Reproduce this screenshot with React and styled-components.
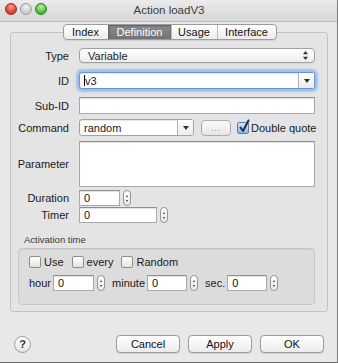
import React from "react";
import styled, { createGlobalStyle, css } from "styled-components";

const Global = createGlobalStyle`
  html, body { margin: 0; padding: 0; }
  body {
    width: 338px; height: 363px; overflow: hidden;
    font-family: "Liberation Sans", Arial, sans-serif;
    font-size: 11px; color: #1a1a1a;
  }
  * { box-sizing: border-box; }
`;

const Window = styled.div`
  width: 338px; height: 363px;
  background: #e8e8e8;
  border-right: 1px solid #7c7c7c;
  border-bottom: 1px solid #6a6a6a;
  display: flex; flex-direction: column;
`;

const TitleBar = styled.div`
  height: 22px; flex: none;
  display: flex; align-items: center;
  padding: 0 0 4px 5px;
  background: linear-gradient(#ebebeb, #d6d6d6);
  border-bottom: 1px solid #bdbdbd;
`;

const Lights = styled.div`
  display: flex; gap: 3px;
`;

const Light = styled.span`
  width: 12px; height: 12px; border-radius: 50%;
  border: 1px solid ${p => p.$edge};
  background: radial-gradient(circle at 50% 30%, ${p => p.$hi}, ${p => p.$c} 70%);
`;

const Title = styled.div`
  flex: 1; text-align: center; margin-left: -46px; margin-top: 3px;
  color: #3c3c3c; font-size: 11.5px;
`;

const Body = styled.div`
  flex: 1; display: flex; flex-direction: column;
  padding: 2px 9px 0 10px;
`;

const Tabs = styled.div`
  align-self: center; display: flex; margin-left: 1px;
  height: 16px; position: relative; z-index: 1;
  border: 1px solid #9c9c9c; border-radius: 4px;
  background: linear-gradient(#ffffff, #ececec);
  box-shadow: 0 1px 0 rgba(0,0,0,0.08);
  overflow: hidden;
`;

const Tab = styled.div`
  display: flex; align-items: center; justify-content: center;
  width: ${p => p.$w}px; height: 100%;
  border-left: 1px solid #bdbdbd;
  &:first-child { border-left: none; }
  font-size: 11px; color: #111;
  ${p => p.$active && css`
    background: linear-gradient(#8c8c8c, #737373);
    color: #fff; border-left-color: #6a6a6a;
    box-shadow: inset 0 1px 2px rgba(0,0,0,0.35);
  `}
`;

const TabBox = styled.div`
  margin-top: -8px; height: 280px; flex: none;
  border: 1px solid #c2c2c2; border-radius: 3px;
  background: #e4e4e4;
  padding: 15px 12px 0 4px;
  display: flex; flex-direction: column;
`;

const Row = styled.div`
  display: flex; align-items: center;
  margin-top: ${p => p.$mt || 0}px;
  height: ${p => p.$h}px;
`;

const Label = styled.div`
  width: 54px; margin-right: 10px; text-align: right; flex: none;
  color: #1a1a1a;
`;

const Field = styled.div`
  height: ${p => p.$h || 16}px;
  width: ${p => (p.$w ? `${p.$w}px` : "auto")};
  flex: ${p => (p.$w ? "none" : 1)};
  background: #fff;
  border: 1px solid #a9a9a9; border-top-color: #8e8e8e;
  box-shadow: inset 0 1px 1px rgba(0,0,0,0.12);
  display: flex; align-items: center;
  padding: 0 4px; font-size: 11px; color: #111;
`;

const Combo = styled.div`
  height: ${p => p.$h || 16}px;
  width: ${p => (p.$w ? `${p.$w}px` : "auto")};
  flex: ${p => (p.$w ? "none" : 1)};
  display: flex;
  border: 1px solid #a3a3a3; border-radius: 3px;
  background: #fff; overflow: hidden;
  ${p => p.$focus && css`
    border-color: #6e95c9;
    box-shadow: 0 0 0 2px #9cc1ef, 0 0 2px 3px rgba(120,165,230,0.5);
  `}
`;

const ComboText = styled.div`
  flex: 1; display: flex; align-items: center; padding: 0 4px;
  box-shadow: inset 0 1px 1px rgba(0,0,0,0.1);
`;

const Caret = styled.span`
  width: 1px; height: 11px; background: #000;
`;

const ComboArrow = styled.div`
  width: 16px; flex: none;
  border-left: 1px solid #b0b0b0;
  background: linear-gradient(#ffffff, #ececec);
  display: flex; align-items: center; justify-content: center;
`;

const Popup = styled.div`
  flex: 1; height: 15px;
  border: 1px solid #a0a0a0; border-radius: 4px;
  background: linear-gradient(#ffffff, #eeeeee);
  box-shadow: 0 1px 0 rgba(0,0,0,0.06);
  display: flex; align-items: center; justify-content: space-between;
  padding: 0 6px 0 8px;
`;

const SmallBtn = styled.div`
  width: 30px; height: 16px; margin-left: 7px; flex: none;
  border: 1px solid #acacac; border-radius: 4px;
  background: linear-gradient(#f9f9f9, #e6e6e6);
  display: flex; align-items: center; justify-content: center;
  color: #8a8a8a; font-size: 9px; letter-spacing: 1px;
`;

const Check = styled.span`
  width: 12px; height: 12px; flex: none;
  border: 1px solid #8d8d8d; border-radius: 2px;
  background: linear-gradient(#ffffff, #e3e3e3);
  position: relative;
  ${p => p.$on && css`
    background: linear-gradient(#cfe3f8, #8db9e8);
    border-color: #5d7fa8;
  `}
`;

const CheckMark = styled.svg`
  position: absolute; left: 0px; top: -4px;
`;

const CheckLabel = styled.label`
  display: flex; align-items: center; gap: ${p => p.$gap || 3}px;
  margin-left: ${p => p.$ml || 0}px;
  font-size: 11px; white-space: nowrap; flex: none;
`;

const Stepper = styled.div`
  width: 8px; height: 16px; margin-left: ${p => p.$ml || 3}px; flex: none;
  border: 1px solid #969696; border-radius: 4px;
  background: linear-gradient(#ffffff, #e8e8e8);
  display: flex; flex-direction: column; align-items: center; justify-content: space-around;
  padding: 2px 0;
`;

const Tri = styled.span`
  width: 0; height: 0;
  border-left: 1.5px solid transparent; border-right: 1.5px solid transparent;
  ${p => p.$down ? css`border-top: 2px solid #333;` : css`border-bottom: 2px solid #333;`}
`;

const GroupTitle = styled.div`
  font-size: 9.5px; color: #3a3a3a;
  margin: 11px 0 0 9px;
`;

const Group = styled.div`
  margin: 3px 0 0 3px;
  height: 57px;
  border: 1px solid #c6c6c6; border-radius: 4px;
  background: #dcdcdc;
  box-shadow: inset 0 1px 1px rgba(0,0,0,0.05);
  padding: 7px 0 0 10px;
  display: flex; flex-direction: column;
`;

const GroupRow = styled.div`
  display: flex; align-items: center;
  margin-top: ${p => p.$mt || 0}px;
`;

const Unit = styled.span`
  margin: 0 2px 0 ${p => p.$ml || 0}px; font-size: 11px;
`;

const Footer = styled.div`
  display: flex; align-items: center;
  margin-top: 23px; padding-left: 4px;
`;

const Help = styled.div`
  width: 17px; height: 17px; border-radius: 50%;
  border: 1px solid #9b9b9b;
  background: linear-gradient(#ffffff, #e4e4e4);
  display: flex; align-items: center; justify-content: center;
  font-weight: bold; font-size: 11px; color: #333;
  margin-right: auto;
`;

const Button = styled.div`
  width: 64px; height: 18px; margin-left: 8px;
  border: 1px solid #9a9a9a; border-radius: 4px;
  background: linear-gradient(#ffffff, #ececec);
  box-shadow: 0 1px 0 rgba(0,0,0,0.08);
  display: flex; align-items: center; justify-content: center;
  font-size: 11px; color: #111;
  &:last-child { margin-right: 4px; }
`;

const DownArrow = () => (
  <svg width="6" height="4" viewBox="0 0 6 4"><path d="M0 0H6L3 4Z" fill="#333" /></svg>
);

const UpDown = () => (
  <svg width="5" height="9" viewBox="0 0 5 9">
    <path d="M0 3.2H5L2.5 0Z" fill="#333" />
    <path d="M0 5.8H5L2.5 9Z" fill="#333" />
  </svg>
);

const Spin = ({ ml }) => (
  <Stepper $ml={ml}><Tri /><Tri $down /></Stepper>
);

export default function App() {
  return (
    <>
      <Global />
      <Window>
        <TitleBar>
          <Lights>
            <Light $c="#d8372f" $hi="#ff9a8f" $edge="#9b2b25" />
            <Light $c="#c9c9c9" $hi="#f4f4f4" $edge="#9c9c9c" />
            <Light $c="#47b536" $hi="#b8f0a0" $edge="#2f7d25" />
          </Lights>
          <Title>Action loadV3</Title>
        </TitleBar>
        <Body>
          <Tabs>
            <Tab $w={44}>Index</Tab>
            <Tab $w={63} $active>Definition</Tab>
            <Tab $w={46}>Usage</Tab>
            <Tab $w={59}>Interface</Tab>
          </Tabs>
          <TabBox>
            <Row $h={15}>
              <Label>Type</Label>
              <Popup>Variable <UpDown /></Popup>
            </Row>
            <Row $h={17} $mt={9}>
              <Label>ID</Label>
              <Combo $focus $h={17}>
                <ComboText><Caret />v3</ComboText>
                <ComboArrow><DownArrow /></ComboArrow>
              </Combo>
            </Row>
            <Row $h={17} $mt={8}>
              <Label>Sub-ID</Label>
              <Field $h={17} />
            </Row>
            <Row $h={17} $mt={5}>
              <Label>Command</Label>
              <Combo $w={115} $h={17}>
                <ComboText>random</ComboText>
                <ComboArrow><DownArrow /></ComboArrow>
              </Combo>
              <SmallBtn>...</SmallBtn>
              <CheckLabel $ml={6} $gap={2}>
                <Check $on>
                  <CheckMark width="12" height="15" viewBox="0 0 12 15">
                    <path d="M2.5 8.5L5 12L10.5 1.5" stroke="#1d2f4c" strokeWidth="2" fill="none" strokeLinecap="round" strokeLinejoin="round" />
                  </CheckMark>
                </Check>
                Double quote
              </CheckLabel>
            </Row>
            <Row $h={46} $mt={5}>
              <Label>Parameter</Label>
              <Field $h={46} />
            </Row>
            <Row $h={16} $mt={3}>
              <Label>Duration</Label>
              <Field $w={41} $h={16}>0</Field>
              <Spin />
            </Row>
            <Row $h={16} $mt={1}>
              <Label>Timer</Label>
              <Field $w={78} $h={16}>0</Field>
              <Spin />
            </Row>
            <GroupTitle>Activation time</GroupTitle>
            <Group>
              <GroupRow>
                <CheckLabel><Check />Use</CheckLabel>
                <CheckLabel $ml={8}><Check />every</CheckLabel>
                <CheckLabel $ml={8}><Check />Random</CheckLabel>
              </GroupRow>
              <GroupRow $mt={7}>
                <Unit>hour</Unit>
                <Field $w={41} $h={16}>0</Field>
                <Spin />
                <Unit $ml={7}>minute</Unit>
                <Field $w={40} $h={16}>0</Field>
                <Spin />
                <Unit $ml={7}>sec.</Unit>
                <Field $w={40} $h={16}>0</Field>
                <Spin />
              </GroupRow>
            </Group>
          </TabBox>
          <Footer>
            <Help>?</Help>
            <Button>Cancel</Button>
            <Button>Apply</Button>
            <Button>OK</Button>
          </Footer>
        </Body>
      </Window>
    </>
  );
}
